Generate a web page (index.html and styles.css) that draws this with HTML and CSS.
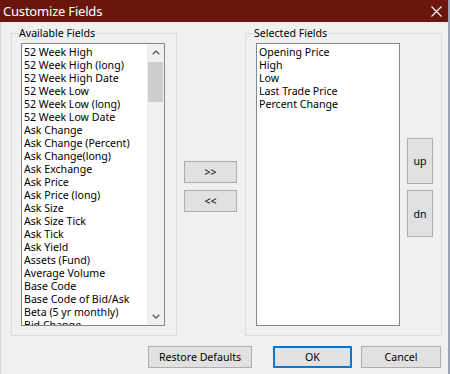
FILE: index.html
```html
<!DOCTYPE html>
<html lang="en">
<head>
  <meta charset="UTF-8">
  <title>Customize Fields</title>
  <link rel="stylesheet" href="styles.css">
</head>
<body>
<div class="window">

  <!-- Title bar -->
  <div class="titlebar">
    <span class="title">Customize Fields</span>
    <svg class="close" width="11" height="11" viewBox="0 0 11 11">
      <path d="M0.5 0.5L10.5 10.5M10.5 0.5L0.5 10.5" stroke="#fff" stroke-width="1.1" fill="none"/>
    </svg>
  </div>

  <div class="body">
    <div class="columns">

      <!-- Available -->
      <fieldset class="group group-left">
        <legend>Available Fields</legend>
        <div class="listbox">
          <ul class="items">
            <li>52 Week High</li>
            <li>52 Week High (long)</li>
            <li>52 Week High Date</li>
            <li>52 Week Low</li>
            <li>52 Week Low (long)</li>
            <li>52 Week Low Date</li>
            <li>Ask Change</li>
            <li>Ask Change (Percent)</li>
            <li>Ask Change(long)</li>
            <li>Ask Exchange</li>
            <li>Ask Price</li>
            <li>Ask Price (long)</li>
            <li>Ask Size</li>
            <li>Ask Size Tick</li>
            <li>Ask Tick</li>
            <li>Ask Yield</li>
            <li>Assets (Fund)</li>
            <li>Average Volume</li>
            <li>Base Code</li>
            <li>Base Code of Bid/Ask</li>
            <li>Beta (5 yr monthly)</li>
            <li>Bid Change</li>
          </ul>
          <div class="scrollbar">
            <div class="sb-btn">
              <svg width="8" height="5" viewBox="0 0 8 5"><path d="M0.7 4.3L4 1L7.3 4.3" stroke="#606060" stroke-width="1.4" fill="none"/></svg>
            </div>
            <div class="sb-track"><div class="sb-thumb"></div></div>
            <div class="sb-btn">
              <svg width="8" height="5" viewBox="0 0 8 5"><path d="M0.7 0.7L4 4L7.3 0.7" stroke="#606060" stroke-width="1.4" fill="none"/></svg>
            </div>
          </div>
        </div>
      </fieldset>

      <!-- Move buttons -->
      <div class="move-buttons">
        <button class="btn btn-move">&gt;&gt;</button>
        <button class="btn btn-move">&lt;&lt;</button>
      </div>

      <!-- Selected -->
      <fieldset class="group group-right">
        <legend>Selected Fields</legend>
        <div class="group-row">
          <div class="listbox">
            <ul class="items">
              <li>Opening Price</li>
              <li>High</li>
              <li>Low</li>
              <li>Last Trade Price</li>
              <li>Percent Change</li>
            </ul>
          </div>
          <div class="order-buttons">
            <button class="btn btn-up">up</button>
            <button class="btn btn-dn">dn</button>
          </div>
        </div>
      </fieldset>
    </div>

    <!-- Footer -->
    <div class="footer">
      <button class="btn btn-restore">Restore Defaults</button>
      <button class="btn btn-ok">OK</button>
      <button class="btn btn-cancel">Cancel</button>
    </div>
  </div>
</div>
</body>
</html>
```

FILE: styles.css
```css
* {
  box-sizing: border-box;
}

body {
  margin: 0;
  font-family: "Noto Sans", "Segoe UI", sans-serif;
  font-size: 10.6px;
  color: #000;
  background: #f0f0f0;
}

.window {
  width: 450px;
  height: 374px;
  background: #f0f0f0;
  border-right: 2px solid #97a3b6;
  overflow: hidden;
}

.titlebar {
  height: 22px;
  background: #6a160c;
  display: flex;
  align-items: center;
  justify-content: space-between;
  padding: 0 6px 0 3px;
}

.title {
  color: #fff;
  font-size: 13px;
  letter-spacing: -0.2px;
  line-height: 22px;
}

.close {
  display: block;
}

.body {
  height: 352px;
  border-left: 1px solid #cdd5e1;
  padding: 4px 6px 0 10px;
}

.columns {
  display: flex;
  height: 310px;
}

.group {
  margin: 0;
  border: 1px solid #dcdcdc;
  min-width: 0;
}

.group legend {
  line-height: 14px;
  padding: 0 1px;
  margin-left: -3px;
}

.group-left {
  width: 166px;
  padding: 3px 11px 9px 9px;
}

.group-right {
  width: 197px;
  padding: 3px 8px 9px 10px;
}

.group-row {
  display: flex;
  gap: 7px;
}

.listbox {
  width: 144px;
  height: 283px;
  border: 1px solid #828790;
  background: #fff;
  display: flex;
  overflow: hidden;
}

.items {
  flex: 1;
  list-style: none;
  margin: 0;
  padding: 2px 0 0;
  overflow: hidden;
}

.items li {
  height: 13px;
  line-height: 13px;
  padding-left: 2px;
  white-space: nowrap;
}

.scrollbar {
  width: 17px;
  background: #f0f0f0;
  display: flex;
  flex-direction: column;
}

.sb-btn {
  height: 17px;
  display: flex;
  align-items: center;
  justify-content: center;
}

.sb-track {
  flex: 1;
  padding: 1px 1px 0;
}

.sb-thumb {
  height: 40px;
  background: #cdcdcd;
}

.move-buttons {
  width: 68px;
  display: flex;
  flex-direction: column;
  gap: 7px;
  padding: 135px 0 0 7px;
}

.order-buttons {
  display: flex;
  flex-direction: column;
  gap: 6px;
  padding-top: 95px;
}

.btn {
  font-family: inherit;
  font-size: 10.6px;
  color: #000;
  background: #e1e1e1;
  border: 1px solid #adadad;
  padding: 0;
  margin: 0;
}

.btn-move {
  width: 53px;
  height: 22px;
}

.btn-up {
  width: 26px;
  height: 46px;
}

.btn-dn {
  width: 26px;
  height: 47px;
}

.footer {
  display: flex;
  justify-content: flex-end;
  margin-top: 10px;
  padding-right: 1px;
}

.btn-restore {
  width: 104px;
  height: 22px;
  margin-right: 21px;
}

.btn-ok {
  width: 79px;
  height: 22px;
  margin-right: 9px;
  border: 2px solid #0078d7;
}

.btn-cancel {
  width: 80px;
  height: 22px;
}
```
